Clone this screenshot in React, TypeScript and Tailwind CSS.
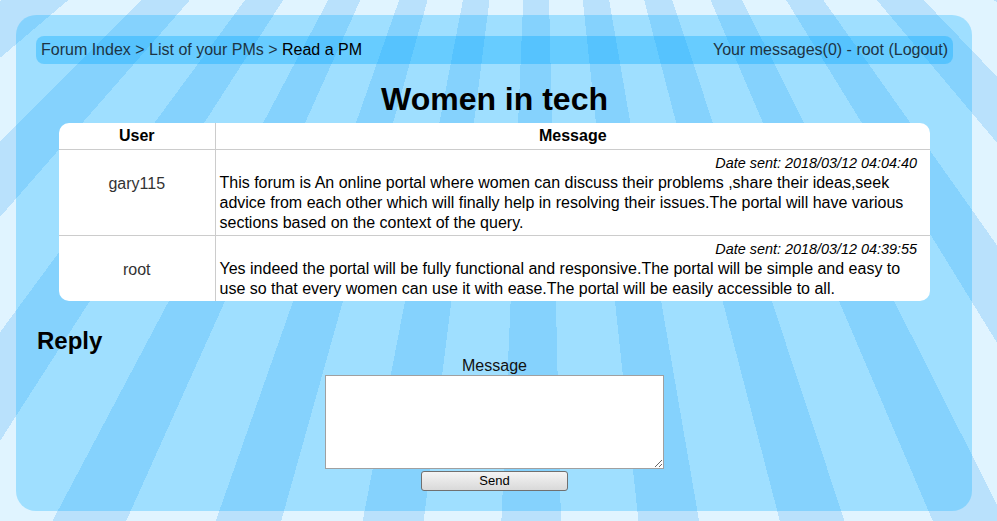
import { type JSX } from 'react'

const messages = [
  {
    id: 1,
    user: 'gary115',
    date: '2018/03/12 04:04:40',
    body: 'This forum is An online portal where women can discuss their problems ,share their ideas,seek advice from each other which will finally help in resolving their issues.The portal will have various sections based on the context of the query.',
    userPad: 'pb-[16px]',
  },
  {
    id: 2,
    user: 'root',
    date: '2018/03/12 04:39:55',
    body: 'Yes indeed the portal will be fully functional and responsive.The portal will be simple and easy to use so that every women can use it with ease.The portal will be easily accessible to all.',
    userPad: 'pt-[3px]',
  },
]

export default function App(): JSX.Element {
  return (
    <div className="min-h-screen bg-[#e0f4ff] bg-[image:repeating-conic-gradient(from_0.2deg_at_540px_-400px,#b9e1fc_0deg_3.7deg,#e0f4ff_3.7deg_8.5deg)] pb-[10px] pl-[16px] pr-[25px] pt-[15px] font-['Liberation_Sans',Arial,sans-serif] text-black">
      <div className="rounded-[20px] bg-[rgba(37,184,255,0.35)] pb-[20px] pl-[20px] pr-[19px] pt-[21px]">
        <div className="flex h-[28px] items-center justify-between rounded-[8px] bg-[rgba(0,170,255,0.35)] px-[5px] text-[16px] text-[#1d3444]">
          <div>
            <a href="#" className="hover:underline">Forum Index</a> &gt;{' '}
            <a href="#" className="hover:underline">List of your PMs</a> &gt;{' '}
            <span className="text-black">Read a PM</span>
          </div>
          <div>
            <a href="#" className="hover:underline">Your messages(0)</a> - root (<a href="#" className="hover:underline">Logout</a>)
          </div>
        </div>

        <h1 className="mt-[17px] text-center text-[32px] font-bold leading-[37px]">Women in tech</h1>

        <div className="mx-auto mt-[5px] w-[871px] overflow-hidden rounded-[10px] bg-white">
          <table className="w-full border-collapse text-[16px]">
            <thead>
              <tr className="border-b border-[#cccccc]">
                <th className="h-[26px] w-[156px] border-r border-[#cccccc] font-bold">User</th>
                <th className="h-[26px] font-bold">Message</th>
              </tr>
            </thead>
            <tbody>
              {messages.map((m, i) => (
                <tr key={m.id} className={i < messages.length - 1 ? 'border-b border-[#cccccc]' : ''}>
                  <td className={`border-r border-[#cccccc] text-center align-middle text-[#333333] ${m.userPad}`}>{m.user}</td>
                  <td className="pb-[2px] pl-[4px] pr-[13px] pt-[5px]">
                    <div className="mb-[1px] text-right text-[14.4px] italic leading-[17px]">Date sent: {m.date}</div>
                    <div className="leading-[20px]">{m.body}</div>
                  </td>
                </tr>
              ))}
            </tbody>
          </table>
        </div>

        <h2 className="ml-[1px] mt-[26px] text-[24px] font-bold leading-[28px]">Reply</h2>

        <form className="flex flex-col items-center" onSubmit={(e) => e.preventDefault()}>
          <label htmlFor="msg" className="mt-[2px] text-[16px] leading-[18px] text-[#111]">Message</label>
          <textarea
            id="msg"
            className="h-[94px] w-[339px] border border-[#a0a0a0] bg-white p-[2px] text-[13px] outline-none"
          />
          <button
            type="submit"
            className="mt-[2px] h-[20px] w-[147px] rounded-[3px] border border-[#707070] bg-gradient-to-b from-[#f4f4f4] to-[#d9d9d9] text-[13px] leading-[18px] text-black"
          >
            Send
          </button>
        </form>
      </div>
    </div>
  )
}
